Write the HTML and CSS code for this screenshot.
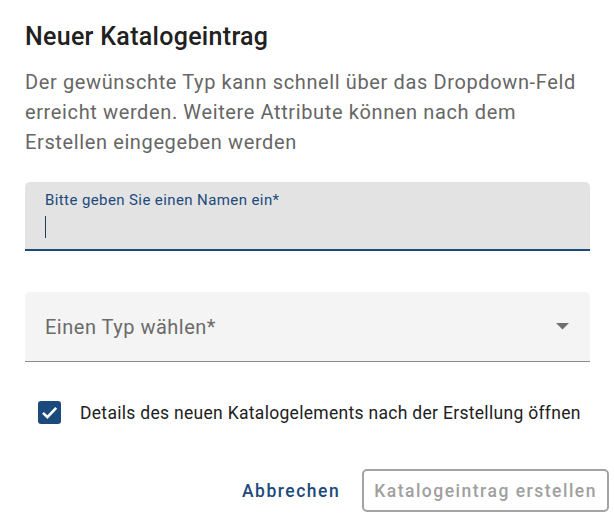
FILE: index.html
```html
<!DOCTYPE html>
<html lang="de">
<head>
<meta charset="utf-8">
<title>Neuer Katalogeintrag</title>
<link rel="stylesheet" href="styles.css">
</head>
<body>
<div class="dialog">
  <div class="content">
    <h2 class="title">Neuer Katalogeintrag</h2>
    <p class="intro">Der gewünschte Typ kann schnell über das Dropdown-Feld<br>erreicht werden. Weitere Attribute können nach dem<br>Erstellen eingegeben werden</p>

    <div class="field field-focused">
      <span class="field-label">Bitte geben Sie einen Namen ein*</span>
      <span class="caret"></span>
    </div>

    <div class="field field-select">
      <span class="select-placeholder">Einen Typ wählen*</span>
      <svg class="select-arrow" width="13" height="7" viewBox="0 0 13 7" aria-hidden="true">
        <polygon points="0,0 13,0 6.5,6.5" fill="#6f6f6f"/>
      </svg>
    </div>

    <label class="check-row">
      <svg class="checkbox" width="23" height="23" viewBox="0 0 23 23" aria-hidden="true">
        <rect x="0" y="0" width="23" height="23" rx="3" fill="#1c4a7c"/>
        <polyline points="5,11.8 9.4,16.2 18.2,6.8" fill="none" stroke="#ffffff" stroke-width="2.6"/>
      </svg>
      <span class="check-text">Details des neuen Katalogelements nach der Erstellung öffnen</span>
    </label>
  </div>

  <div class="actions">
    <button class="btn btn-text">Abbrechen</button>
    <button class="btn btn-outlined" disabled>Katalogeintrag erstellen</button>
  </div>
</div>
</body>
</html>
```

FILE: styles.css
```css
* {
  box-sizing: border-box;
}

body {
  margin: 0;
  background: #ffffff;
  font-family: Roboto, "Noto Sans", "Liberation Sans", sans-serif;
}

.dialog {
  width: 614px;
  height: 524px;
  padding: 17px 5px 0 25px;
  display: flex;
  flex-direction: column;
}

.content {
  padding-right: 19px;
  display: flex;
  flex-direction: column;
}

.title {
  margin: 0;
  font-size: 25px;
  line-height: 40px;
  font-weight: 500;
  letter-spacing: 0.3px;
  color: #212121;
}

.intro {
  margin: 10px 0 0;
  font-size: 20px;
  line-height: 30px;
  letter-spacing: 0.62px;
  color: #666666;
}

.field {
  border-radius: 5px 5px 0 0;
  padding: 0 20px;
}

.field-focused {
  margin-top: 25px;
  height: 69px;
  background: #e3e3e3;
  border-bottom: 2px solid #1c4a7c;
  padding-top: 9px;
  display: flex;
  flex-direction: column;
}

.field-label {
  font-size: 15px;
  line-height: 18px;
  letter-spacing: 0.4px;
  color: #1c4a7c;
}

.caret {
  margin-top: 7px;
  width: 1px;
  height: 22px;
  background: #1c3f66;
}

.field-select {
  margin-top: 41px;
  height: 70px;
  background: #f4f4f4;
  border-bottom: 1px solid #8c8c8c;
  display: flex;
  align-items: center;
  justify-content: space-between;
}

.select-placeholder {
  font-size: 20px;
  letter-spacing: 0.5px;
  color: #6b6b6b;
}

.select-arrow {
  display: block;
  margin-right: 1px;
}

.check-row {
  margin-top: 39px;
  padding-left: 13px;
  display: flex;
  align-items: center;
  gap: 19px;
}

.checkbox {
  display: block;
  flex: none;
}

.check-text {
  font-size: 17.5px;
  letter-spacing: 0.3px;
  color: #212121;
  white-space: nowrap;
}

.actions {
  margin-top: 45px;
  display: flex;
  justify-content: flex-end;
  align-items: center;
  gap: 12px;
}

.btn {
  font-family: Roboto, "Noto Sans", "Liberation Sans", sans-serif;
  font-size: 17.5px;
  font-weight: 500;
  letter-spacing: 1.5px;
  height: 43px;
  background: transparent;
  border-radius: 5px;
  cursor: pointer;
}

.btn-text {
  border: none;
  padding: 0 10px;
  color: #1c4a7c;
}

.btn-outlined {
  border: 2px solid #a3a3a3;
  padding: 0 10px 0 10px;
  color: #a0a0a0;
  cursor: default;
}
```
